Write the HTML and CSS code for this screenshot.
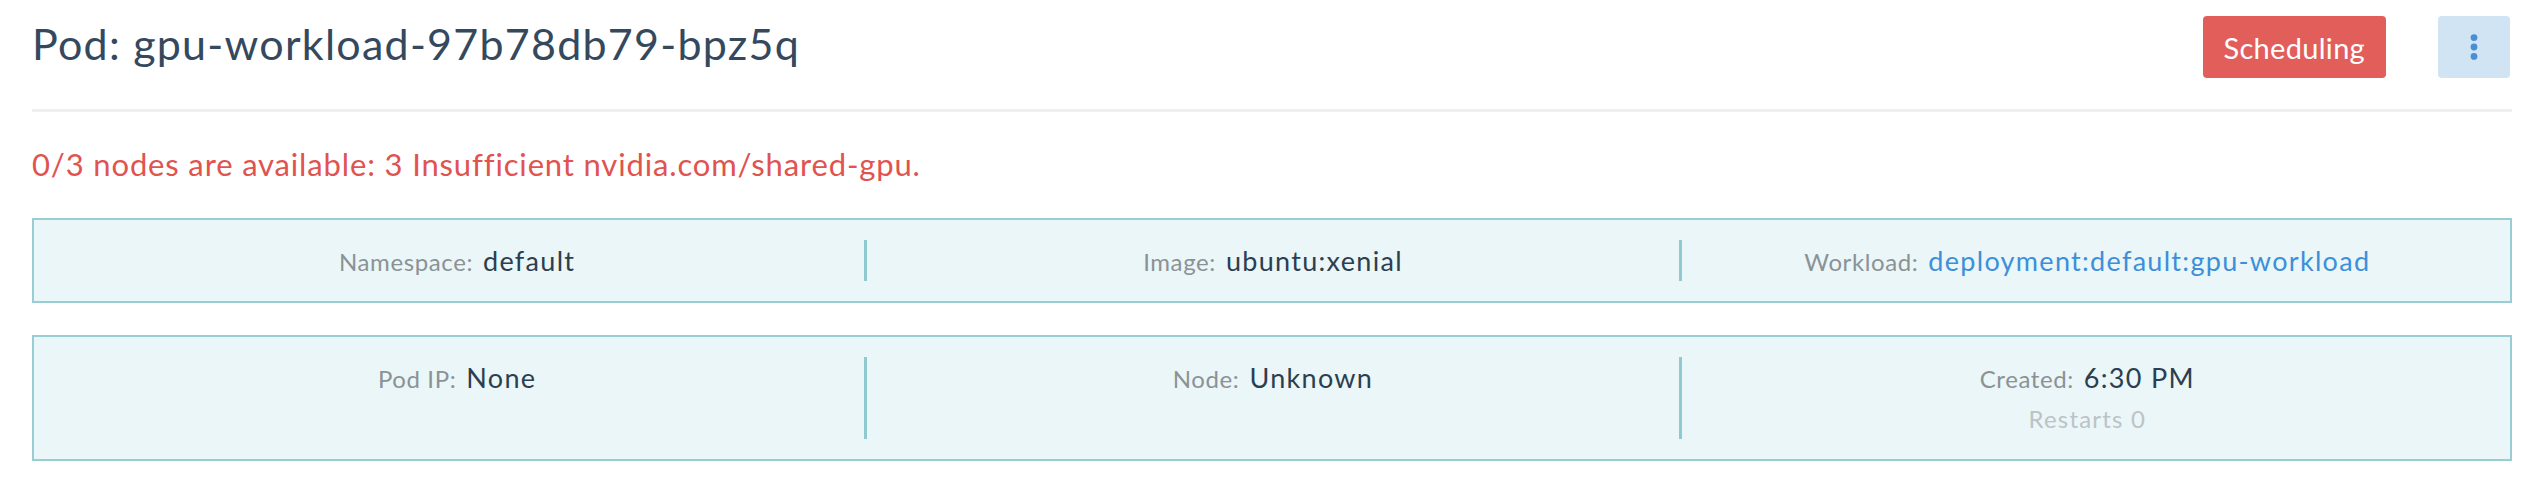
FILE: index.html
```html
<!DOCTYPE html>
<html lang="en">
<head>
<meta charset="utf-8">
<title>Pod: gpu-workload-97b78db79-bpz5q</title>
<link rel="stylesheet" href="styles.css">
</head>
<body>
<div class="page">
  <header class="header">
    <h1 class="title">Pod: gpu-workload-97b78db79-bpz5q</h1>
    <div class="actions">
      <span class="badge">Scheduling</span>
      <button class="kebab" type="button" aria-label="More actions">
        <svg width="8" height="26" viewBox="0 0 8 26" aria-hidden="true">
          <circle cx="4" cy="3.6" r="3.4"></circle>
          <circle cx="4" cy="13" r="3.4"></circle>
          <circle cx="4" cy="22.4" r="3.4"></circle>
        </svg>
      </button>
    </div>
  </header>
  <div class="rule"></div>
  <p class="error">0/3 nodes are available: 3 Insufficient nvidia.com/shared-gpu.</p>
  <section class="info-box">
    <div class="cell"><div class="line"><span class="label">Namespace:</span><span class="value">default</span></div></div>
    <div class="cell"><div class="line"><span class="label">Image:</span><span class="value">ubuntu:xenial</span></div></div>
    <div class="cell"><div class="line"><span class="label">Workload:</span><a class="value link" href="#">deployment:default:gpu-workload</a></div></div>
  </section>
  <section class="info-box">
    <div class="cell"><div class="line"><span class="label">Pod IP:</span><span class="value">None</span></div></div>
    <div class="cell"><div class="line"><span class="label">Node:</span><span class="value">Unknown</span></div></div>
    <div class="cell">
      <div class="line"><span class="label">Created:</span><span class="value">6:30 PM</span></div>
      <div class="line sub">Restarts 0</div>
    </div>
  </section>
</div>
</body>
</html>
```

FILE: styles.css
```css
* {
  box-sizing: border-box;
}

html, body {
  margin: 0;
  padding: 0;
  background: #ffffff;
}

body {
  font-family: "Lato", "Open Sans", sans-serif;
  color: #2c3e50;
}

.page {
  padding: 16px 16px 0 32px;
}

.header {
  display: flex;
  align-items: flex-start;
  justify-content: space-between;
  height: 62px;
}

.title {
  margin: 0;
  font-size: 43px;
  font-weight: 400;
  line-height: 56px;
  letter-spacing: 1.25px;
  color: #34495e;
}

.actions {
  display: flex;
  align-items: center;
  gap: 52px;
  padding-right: 2px;
}

.badge {
  display: inline-flex;
  align-items: center;
  justify-content: center;
  height: 62px;
  padding: 0 21px;
  background: #e15e5b;
  color: #ffffff;
  border-radius: 4px;
  font-size: 29px;
  letter-spacing: 0.3px;
}

.kebab {
  display: flex;
  align-items: center;
  justify-content: center;
  width: 72px;
  height: 62px;
  padding: 0;
  border: none;
  border-radius: 4px;
  background: #d1e4f4;
}

.kebab svg circle {
  fill: #4a8fd6;
}

.rule {
  margin-top: 31px;
  height: 3px;
  background: #edf0f2;
}

.error {
  margin: 34px 0 36px;
  font-size: 31px;
  line-height: 36px;
  letter-spacing: 0.85px;
  color: #e0534f;
}

.info-box {
  display: grid;
  grid-template-columns: repeat(3, 1fr);
  padding: 20px 17px 20px 16px;
  background: #eaf6f7;
  border: 2px solid #97cdd3;
  margin-bottom: 32px;
}

.cell {
  text-align: center;
}

.cell + .cell {
  border-left: 3px solid #8ecad0;
}

.line {
  font-size: 27px;
  line-height: 41px;
  height: 41px;
  white-space: nowrap;
}

.label {
  font-size: 24px;
  line-height: 1;
  letter-spacing: 0.6px;
  color: #8b9296;
  margin-right: 10px;
}

.value {
  font-size: 27px;
  line-height: 1;
  letter-spacing: 1.3px;
  color: #2c3e50;
}

.link {
  color: #3d8fda;
  text-decoration: none;
}

.sub {
  font-size: 24px;
  letter-spacing: 1.2px;
  color: #bcc3c7;
}
```
